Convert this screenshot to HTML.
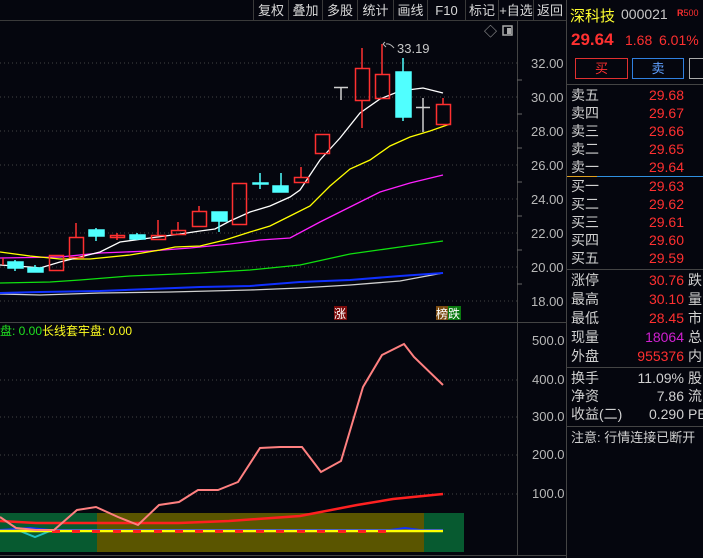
<!DOCTYPE html>
<html><head><meta charset="utf-8"><style>
*{margin:0;padding:0;box-sizing:border-box}
body{width:703px;height:558px;background:#05060e;overflow:hidden;position:relative;font-family:"Liberation Sans","Noto Sans CJK SC",sans-serif;color:#c8c8c8}
.a{position:absolute;white-space:nowrap}
.btn{position:absolute;top:0;height:21px;border-left:1px solid #3a3a3a;font-size:13px;line-height:21px;text-align:center;color:#d8d8d8}
.r{font-size:14px;line-height:18px}
.lab{position:absolute;left:571px;color:#d0d0d0}
.val{position:absolute;right:19px;text-align:right;color:#ff3030}
.x{position:absolute;left:688px;color:#d0d0d0}
</style></head><body>
<div class="a" style="left:0;top:20px;width:566px;height:1px;background:#3a3a3a"></div>
<div class="btn" style="left:253px;width:35px">复权</div>
<div class="btn" style="left:288px;width:34px">叠加</div>
<div class="btn" style="left:322px;width:35px">多股</div>
<div class="btn" style="left:357px;width:36px">统计</div>
<div class="btn" style="left:393px;width:34px">画线</div>
<div class="btn" style="left:427px;width:38px">F10</div>
<div class="btn" style="left:465px;width:33px">标记</div>
<div class="btn" style="left:498px;width:35px">+自选</div>
<div class="btn" style="left:533px;width:33px">返回</div>
<svg class="a" style="left:0;top:0" width="567" height="558">
<g stroke="#444" stroke-dasharray="1,3" stroke-width="1">
<line x1="0" y1="63" x2="517" y2="63"/><line x1="0" y1="97" x2="517" y2="97"/><line x1="0" y1="131" x2="517" y2="131"/><line x1="0" y1="165" x2="517" y2="165"/><line x1="0" y1="199" x2="517" y2="199"/><line x1="0" y1="233" x2="517" y2="233"/><line x1="0" y1="267" x2="517" y2="267"/><line x1="0" y1="301" x2="517" y2="301"/>
<line x1="0" y1="380" x2="517" y2="380"/><line x1="0" y1="417" x2="517" y2="417"/><line x1="0" y1="455" x2="517" y2="455"/><line x1="0" y1="494" x2="517" y2="494"/>
</g>
<line x1="517.5" y1="21" x2="517.5" y2="555" stroke="#444"/>
<line x1="566.5" y1="0" x2="566.5" y2="558" stroke="#444"/>
<line x1="0" y1="322.5" x2="566" y2="322.5" stroke="#444"/>
<line x1="0" y1="555.5" x2="566" y2="555.5" stroke="#444"/>
<g stroke="#666"><line x1="517" y1="80" x2="522" y2="80"/><line x1="517" y1="114" x2="522" y2="114"/><line x1="517" y1="148" x2="522" y2="148"/><line x1="517" y1="182" x2="522" y2="182"/><line x1="517" y1="216" x2="522" y2="216"/><line x1="517" y1="250" x2="522" y2="250"/><line x1="517" y1="284" x2="522" y2="284"/></g>
<g fill="#b8b8b8" font-size="13" font-family="Liberation Sans,sans-serif">
<text x="531" y="68">32.00</text><text x="531" y="102">30.00</text><text x="531" y="136">28.00</text><text x="531" y="170">26.00</text><text x="531" y="204">24.00</text><text x="531" y="238">22.00</text><text x="531" y="272">20.00</text><text x="531" y="306">18.00</text>
<text x="532" y="345">500.0</text><text x="532" y="384">400.0</text><text x="532" y="421">300.0</text><text x="532" y="459">200.0</text><text x="532" y="498">100.0</text>
</g>
<text x="484" y="36" fill="#aaa" font-size="13">◇</text>
<rect x="503" y="26" width="9" height="9" fill="none" stroke="#aaa" stroke-width="1.5"/><rect x="507" y="28" width="4" height="6" fill="#aaa"/>
<!-- MAs -->
<g fill="none" stroke-width="1.3">
<polyline stroke="#d0d0d0" points="0,294 40,295 100,293 170,292 250,290 300,288 350,285 400,281 443,273"/>
<polyline stroke="#1030ff" stroke-width="2" points="0,293 40,292 100,291 150,289 200,287 250,286 300,282 350,280 400,276 443,273"/>
<polyline stroke="#10e010" points="0,283 50,282 80,280 130,276 200,273 250,270 300,265 350,254 400,247 443,241"/>
<polyline stroke="#ff20ff" points="0,258 60,257 100,253 150,251 190,248 230,244 260,240 290,238 320,222 350,207 380,192 410,183 443,175"/>
<polyline stroke="#ffff00" points="0,252 30,256 60,259 90,259 130,255 160,250 175,247 200,246 225,240 250,232 270,226 290,216 310,206 330,186 350,169 370,160 390,146 410,137 430,131 450,124"/>
<polyline stroke="#ffffff" points="0,265 30,267 40,268 60,262 100,252 120,242 150,238 180,234 200,231 215,229 230,221 250,212 270,206 290,197 300,190 320,160 340,138 360,113 380,99 400,91 423,88 443,93"/>
</g>
<!-- candles -->
<g stroke="#ff3030" stroke-width="1.5" fill="none">
<line x1="3" y1="258" x2="3" y2="265"/>
<rect x="49.5" y="255.5" width="14" height="15"/>
<line x1="76" y1="223" x2="76" y2="237"/><rect x="69.5" y="237.5" width="14" height="20"/>
<line x1="117" y1="233" x2="117" y2="240"/><rect x="110.5" y="235.5" width="14" height="2"/>
<line x1="158" y1="220" x2="158" y2="235"/><rect x="151.5" y="235.5" width="14" height="4"/>
<line x1="178" y1="222" x2="178" y2="230"/><rect x="171.5" y="230.5" width="14" height="4"/>
<line x1="199" y1="206" x2="199" y2="211"/><rect x="192.5" y="211.5" width="14" height="15"/>
<rect x="232.5" y="183.5" width="14" height="41"/>
<line x1="301" y1="167" x2="301" y2="177"/><rect x="294.5" y="177.5" width="14" height="5"/>
<rect x="315.5" y="134.5" width="14" height="19"/>
<line x1="362" y1="48" x2="362" y2="68"/><line x1="362" y1="100" x2="362" y2="128"/><rect x="355.5" y="68.5" width="14" height="32"/>
<line x1="382" y1="44" x2="382" y2="74"/><rect x="375.5" y="74.5" width="14" height="24"/>
<line x1="443" y1="98" x2="443" y2="104"/><rect x="436.5" y="104.5" width="14" height="20"/>
</g>
<g fill="#50ffff" stroke="#50ffff" stroke-width="1.5">
<line x1="15" y1="260" x2="15" y2="271"/><rect x="8" y="262" width="15" height="6"/>
<line x1="35" y1="265" x2="35" y2="272"/><rect x="28" y="268" width="15" height="4"/>
<line x1="96" y1="228" x2="96" y2="241"/><rect x="89" y="230" width="15" height="6"/>
<line x1="137" y1="233" x2="137" y2="240"/><rect x="130" y="235" width="15" height="4"/>
<line x1="219" y1="212" x2="219" y2="232"/><rect x="212" y="212" width="15" height="9"/>
<line x1="260" y1="173" x2="260" y2="189"/><rect x="253" y="183" width="15" height="1"/>
<line x1="281" y1="173" x2="281" y2="192"/><rect x="273" y="186" width="15" height="6"/>
<line x1="403" y1="58" x2="403" y2="121"/><rect x="396" y="72" width="15" height="45"/>
</g>
<g stroke="#cfcfcf" stroke-width="1.5">
<line x1="334" y1="87.5" x2="348" y2="87.5"/><line x1="341" y1="87" x2="341" y2="100"/>
<line x1="416" y1="107.5" x2="430" y2="107.5"/><line x1="423" y1="98" x2="423" y2="132"/>
</g>
<path d="M383 44 l2 -2 M383 44 l3 3 M386 44 q4 -1 8 4" stroke="#bbb" fill="none"/>
<text x="397" y="53" fill="#c8c8c8" font-size="13">33.19</text>
<rect x="334" y="306" width="13" height="14" fill="#7a0a0a"/><text x="334" y="318" fill="#fff" font-size="12">涨</text>
<rect x="436" y="306" width="12" height="14" fill="#7a4a10"/><text x="436" y="318" fill="#fff" font-size="12">榜</text>
<rect x="448" y="306" width="13" height="14" fill="#0a7a10"/><text x="448" y="318" fill="#fff" font-size="12">跌</text>
<!-- lower panel -->
<text x="0" y="335" font-size="12" fill="#20e020">盘: 0.00</text>
<text x="42" y="335" font-size="12" fill="#ffff20">长线套牢盘: 0.00</text>
<rect x="0" y="513" width="464" height="39" fill="#075a30"/>
<rect x="97" y="513" width="327" height="39" fill="#5a5500"/>
<polyline fill="none" stroke="#ff2020" stroke-width="2.5" points="0,521 36,523 179,523 229,521 300,516 357,505 393,499 443,494"/>
<polyline fill="none" stroke="#20c0c0" stroke-width="2" points="20,531 35,537 50,531"/>
<polyline fill="none" stroke="#1030ff" stroke-width="2" points="0,530 30,528 50,530 390,530 405,528 420,530 443,530"/>
<line x1="0" y1="531" x2="443" y2="531" stroke="#ffff00" stroke-width="2.5"/>
<g fill="#ff2020"><rect x="52" y="530" width="8" height="3"/><rect x="72" y="530" width="8" height="3"/><rect x="92" y="530" width="8" height="3"/><rect x="113" y="530" width="8" height="3"/><rect x="133" y="530" width="8" height="3"/><rect x="154" y="530" width="8" height="3"/><rect x="175" y="530" width="8" height="3"/><rect x="195" y="530" width="8" height="3"/><rect x="215" y="530" width="8" height="3"/><rect x="235" y="530" width="8" height="3"/><rect x="256" y="530" width="8" height="3"/><rect x="276" y="530" width="8" height="3"/><rect x="297" y="530" width="8" height="3"/><rect x="317" y="530" width="8" height="3"/><rect x="338" y="530" width="8" height="3"/><rect x="358" y="530" width="8" height="3"/><rect x="378" y="530" width="8" height="3"/></g>
<polyline fill="none" stroke="#ff8080" stroke-width="2" points="0,517 16,528 36,530 54,530 77,510 96,507 118,517 138,525 159,505 179,502 198,490 218,490 238,482 260,448 280,447 302,447 321,472 341,461 363,387 382,355 404,344 414,357 443,385"/>
</svg>
<!-- right panel -->
<div class="a" style="left:570px;top:5px;font-size:15px;color:#ffff30">深科技</div>
<div class="a" style="left:621px;top:6px;font-size:14px;color:#c8c8c8">000021</div>
<div class="a" style="left:677px;top:8px;font-size:9px;color:#ff3030;font-weight:bold">R<span style="font-weight:normal">500</span></div>
<div class="a" style="left:571px;top:30px;font-size:17px;font-weight:bold;color:#ff3030">29.64</div>
<div class="a" style="left:625px;top:32px;font-size:14px;color:#ff3030">1.68</div>
<div class="a" style="left:659px;top:32px;font-size:14px;color:#ff3030">6.01%</div>
<div class="a" style="left:575px;top:58px;width:53px;height:21px;border:1px solid #e03030;color:#ff3030;text-align:center;font-size:13px;line-height:19px">买</div>
<div class="a" style="left:632px;top:58px;width:52px;height:21px;border:1px solid #3080e0;color:#60a0ff;text-align:center;font-size:13px;line-height:19px">卖</div>
<div class="a" style="left:689px;top:58px;width:20px;height:21px;border:1px solid #aaa"></div>
<div class="a" style="left:567px;top:84px;width:136px;height:1px;background:#444"></div>
<div class="a" style="left:567px;top:176px;width:30px;height:1px;background:#e0a020"></div>
<div class="a" style="left:597px;top:176px;width:106px;height:1px;background:#3090e0"></div>
<div class="a" style="left:567px;top:269px;width:136px;height:1px;background:#444"></div>
<div class="a" style="left:567px;top:367px;width:136px;height:1px;background:#444"></div>
<div class="a" style="left:567px;top:426px;width:136px;height:1px;background:#444"></div>
<div class="r">
<div class="lab" style="top:86px">卖五</div><div class="val" style="top:86px">29.68</div>
<div class="lab" style="top:104px">卖四</div><div class="val" style="top:104px">29.67</div>
<div class="lab" style="top:122px">卖三</div><div class="val" style="top:122px">29.66</div>
<div class="lab" style="top:140px">卖二</div><div class="val" style="top:140px">29.65</div>
<div class="lab" style="top:158px">卖一</div><div class="val" style="top:158px">29.64</div>
<div class="lab" style="top:177px">买一</div><div class="val" style="top:177px">29.63</div>
<div class="lab" style="top:195px">买二</div><div class="val" style="top:195px">29.62</div>
<div class="lab" style="top:213px">买三</div><div class="val" style="top:213px">29.61</div>
<div class="lab" style="top:231px">买四</div><div class="val" style="top:231px">29.60</div>
<div class="lab" style="top:249px">买五</div><div class="val" style="top:249px">29.59</div>
<div class="lab" style="top:271px">涨停</div><div class="val" style="top:271px">30.76</div><div class="x" style="top:271px">跌</div>
<div class="lab" style="top:290px">最高</div><div class="val" style="top:290px">30.10</div><div class="x" style="top:290px">量</div>
<div class="lab" style="top:309px">最低</div><div class="val" style="top:309px">28.45</div><div class="x" style="top:309px">市</div>
<div class="lab" style="top:328px">现量</div><div class="val" style="top:328px;color:#d020d0">18064</div><div class="x" style="top:328px">总</div>
<div class="lab" style="top:347px">外盘</div><div class="val" style="top:347px">955376</div><div class="x" style="top:347px">内</div>
<div class="lab" style="top:369px">换手</div><div class="val" style="top:369px;color:#d0d0d0">11.09%</div><div class="x" style="top:369px">股</div>
<div class="lab" style="top:387px">净资</div><div class="val" style="top:387px;color:#d0d0d0">7.86</div><div class="x" style="top:387px">流</div>
<div class="lab" style="top:405px">收益(二)</div><div class="val" style="top:405px;color:#d0d0d0">0.290</div><div class="x" style="top:405px">PE</div>
<div class="lab" style="top:429px;font-size:13px">注意: 行情连接已断开</div>
</div>
</body></html>
